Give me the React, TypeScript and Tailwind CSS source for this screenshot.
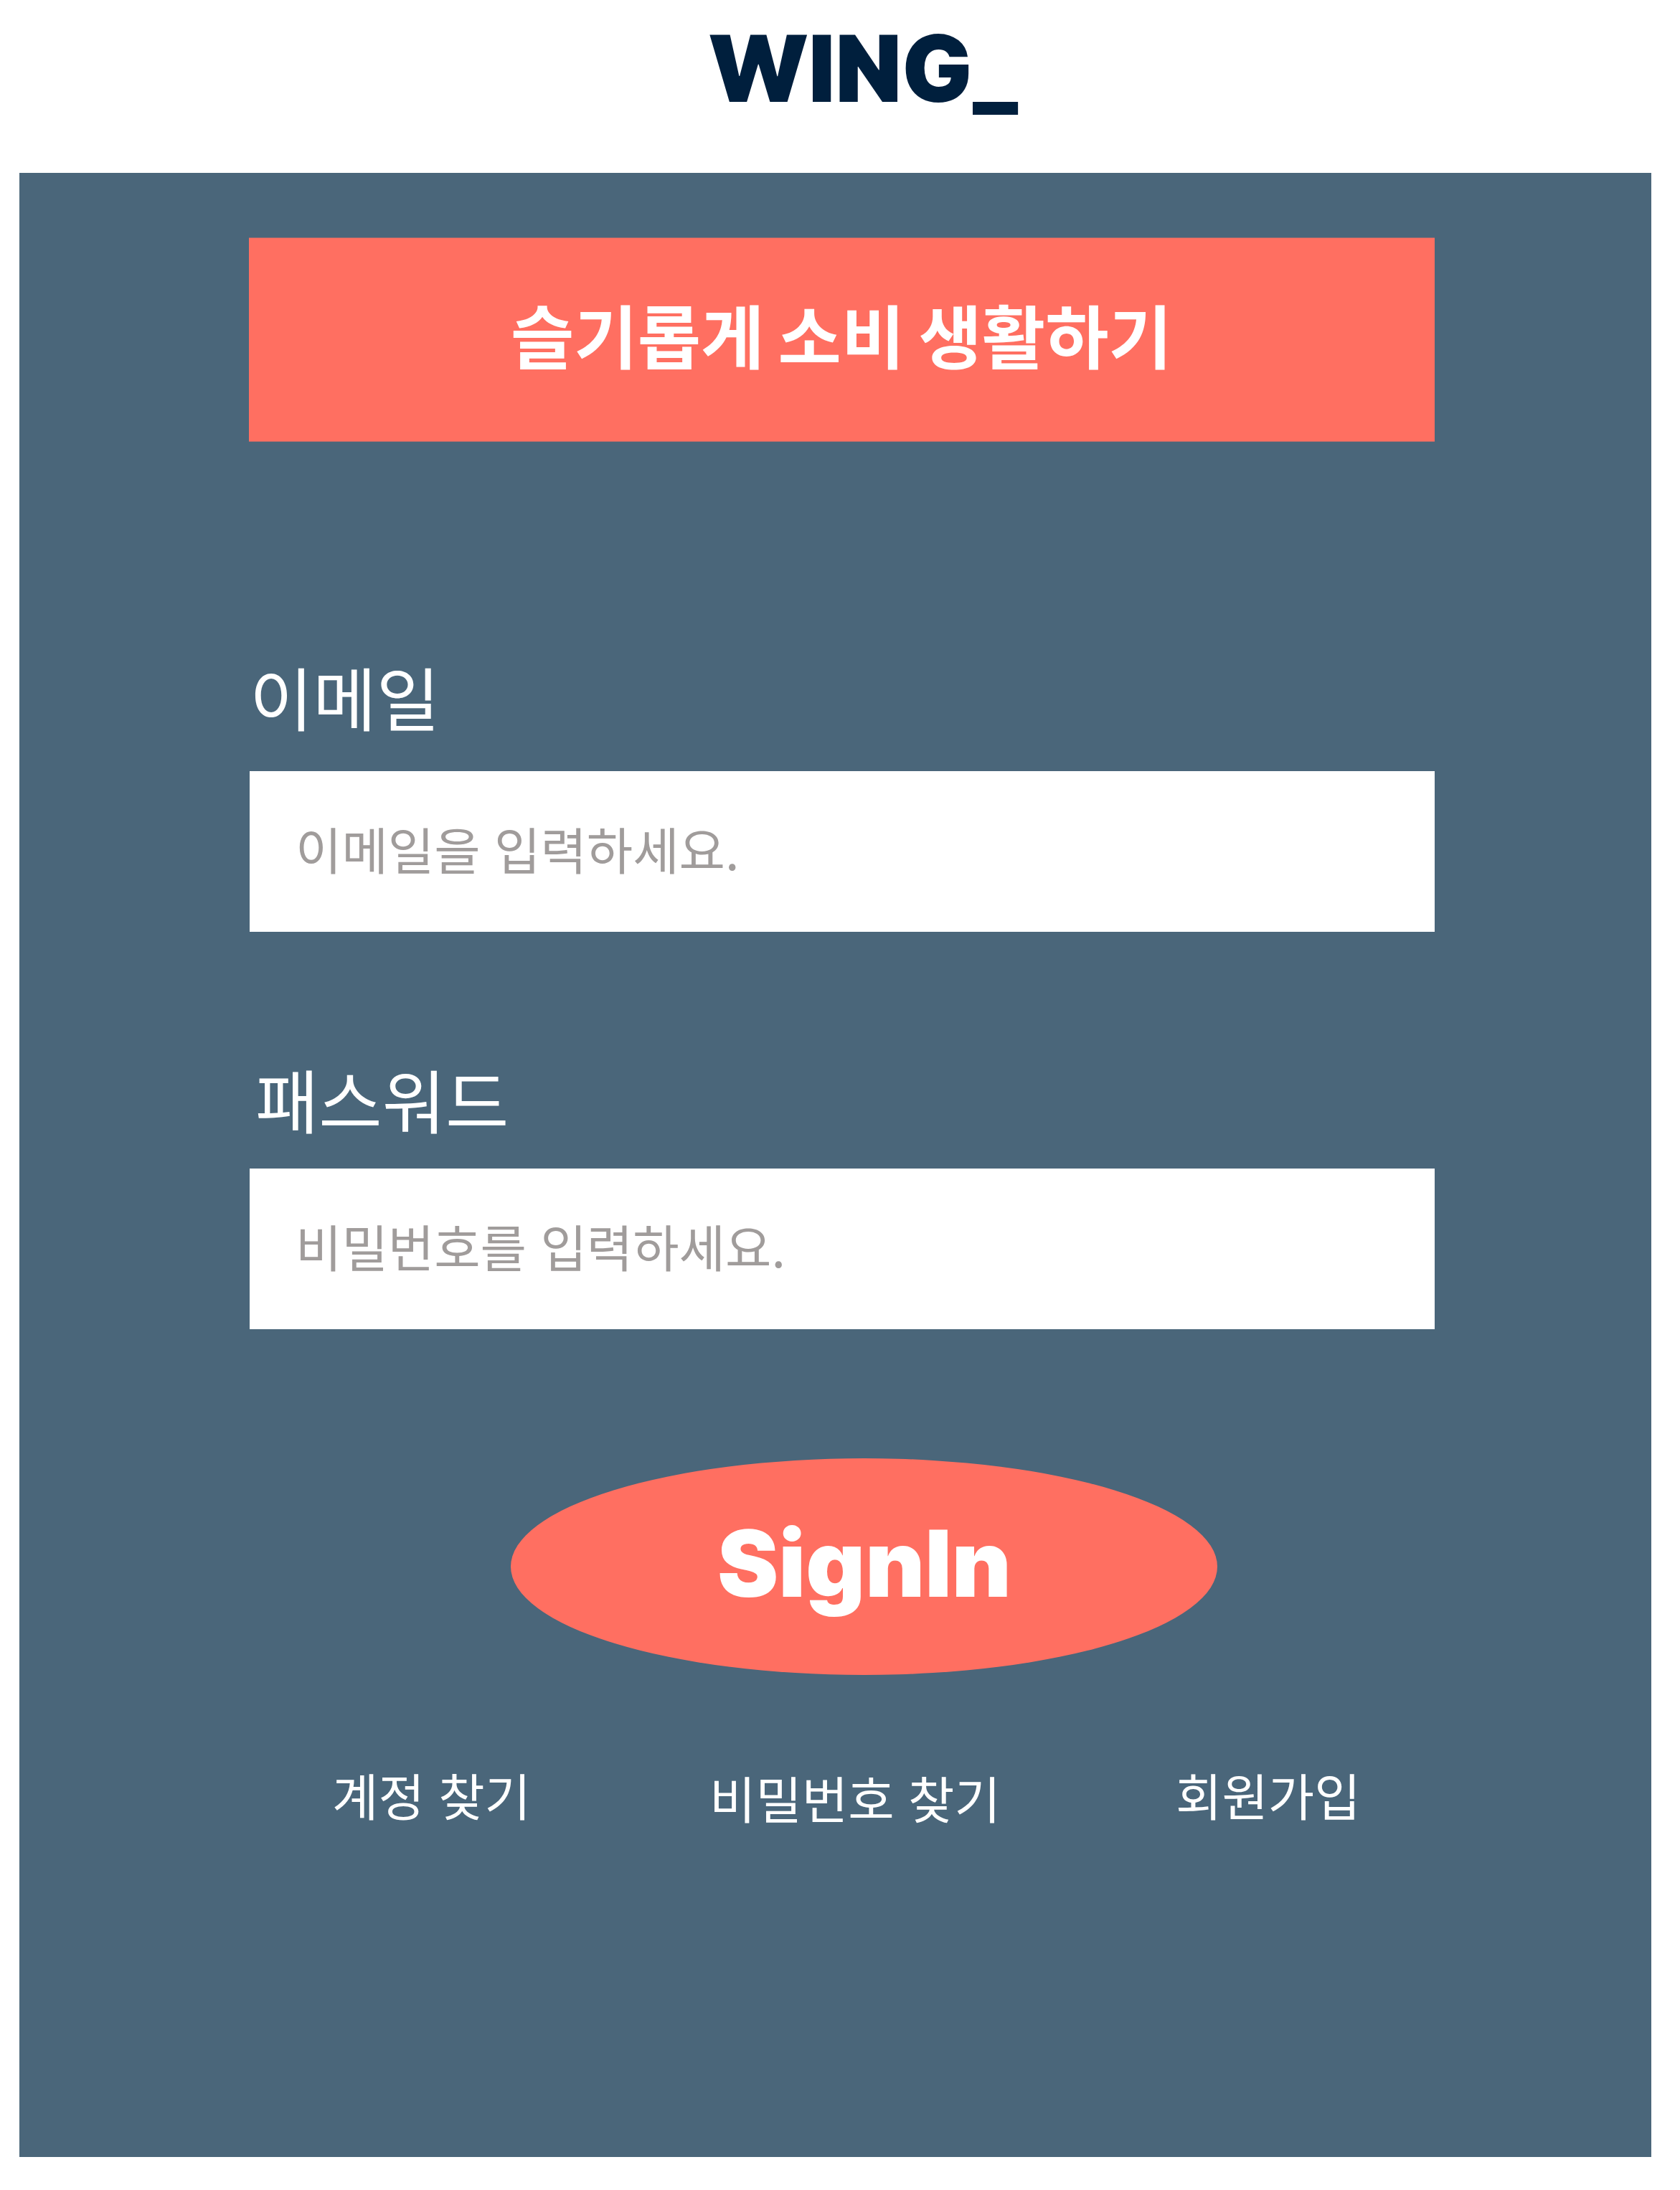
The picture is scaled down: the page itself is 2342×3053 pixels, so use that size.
type FieldProps = {
  label: string;
  hint: string;
  labelClass: string;
  boxClass: string;
};

function Field({ label, hint, labelClass, boxClass }: FieldProps) {
  return (
    <label className="block">
      <span className={`block h-24 text-[96px] leading-none text-white ${labelClass}`}>{label}</span>
      <span
        className={`ml-px flex h-56 w-[1652px] items-start bg-white pl-16 pt-[73px] text-[70px] leading-none text-[#a09c9b] ${boxClass}`}
      >
        {hint}
      </span>
    </label>
  );
}

export default function App() {
  return (
    <div className="h-[3053px] w-[2342px] overflow-hidden bg-white font-['Noto_Sans_CJK_KR',sans-serif] [word-spacing:3.7px]">
      <header className="h-[241px] pl-[989px] pt-8">
        <h1 className="font-['Inter_Tight','Inter',sans-serif] text-[128px] font-black leading-none tracking-[3.1px] text-[#001f3d]">
          WING_
        </h1>
      </header>

      <main className="ml-[27px] h-[2766px] w-[2275px] bg-[#4a667a] pl-80 pt-[90px]">
        <div className="h-[285px] w-[1653px] border-y border-b-[#b36b6c] border-t-[#a46b6e] bg-[#ff6f61] pl-[365px] pt-[85px]">
          <h2 className="whitespace-nowrap text-[96px] font-bold leading-none text-white [word-spacing:-2.5px]">
            슬기롭게 소비 생활하기
          </h2>
        </div>

        <form className="mt-[306px]">
          <Field label="이메일" hint="이메일을 입력하세요." labelClass="pl-px" boxClass="mt-[57px]" />
          <div className="mt-[184px]">
            <Field label="패스워드" hint="비밀번호를 입력하세요." labelClass="pl-[9px]" boxClass="mt-[50px]" />
          </div>
          <button
            type="button"
            className="ml-[365px] mt-[180px] flex h-[302px] w-[985px] items-center justify-center rounded-[50%] bg-[#ff6f61] pb-[9px] pl-1 font-['Inter_Tight','Inter',sans-serif] text-[128px] font-black leading-none tracking-[3.1px] text-white"
          >
            SignIn
          </button>
        </form>

        <nav className="mt-[132px] flex items-start text-[70px] leading-none text-white">
          <a className="ml-[116px] w-[526px]">계정 찾기</a>
          <a className="mt-1 w-[650px]">비밀번호 찾기</a>
          <a>회원가입</a>
        </nav>
      </main>
    </div>
  );
}
